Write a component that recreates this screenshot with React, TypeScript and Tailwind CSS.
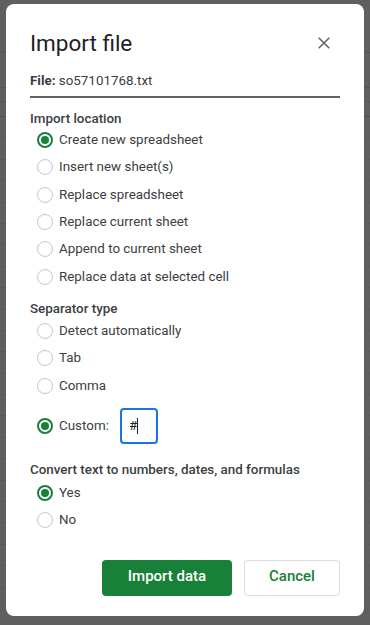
import React, { useState } from 'react';

const FONT = { fontFamily: 'Roboto, "Liberation Sans", Arial, sans-serif' };

interface RadioProps {
  label: string;
  checked: boolean;
  onSelect: () => void;
  children?: React.ReactNode;
}

function Radio({ label, checked, onSelect, children }: RadioProps) {
  return (
    <div className="flex items-center h-[27.3px] cursor-pointer" onClick={onSelect}>
      <span
        className={`ml-[7px] flex items-center justify-center w-4 h-4 rounded-full shrink-0 ${
          checked ? 'border-2 border-[#188038]' : 'border-[1.5px] border-[#c4c7c5]'
        }`}
      >
        {checked && <span className="w-2 h-2 rounded-full bg-[#188038]" />}
      </span>
      <span className="ml-[6px] text-[13.4px] leading-4 text-[#3c4043]">{label}</span>
      {children}
    </div>
  );
}

export default function App() {
  const [location, setLocation] = useState('create');
  const [separator, setSeparator] = useState('custom');
  const [convert, setConvert] = useState('yes');

  const locations = [
    { value: 'create', label: 'Create new spreadsheet' },
    { value: 'insert', label: 'Insert new sheet(s)' },
    { value: 'replace', label: 'Replace spreadsheet' },
    { value: 'current', label: 'Replace current sheet' },
    { value: 'append', label: 'Append to current sheet' },
    { value: 'cell', label: 'Replace data at selected cell' },
  ];

  const separators = [
    { value: 'auto', label: 'Detect automatically' },
    { value: 'tab', label: 'Tab' },
    { value: 'comma', label: 'Comma' },
  ];

  // 背景のシート行
  const rows = Array.from({ length: 22 });

  return (
    <div className="relative w-[370px] h-[625px] overflow-hidden bg-[#5f5f5f]" style={FONT}>
      {/* 背景（暗くしたスプレッドシート） */}
      <div className="flex flex-col">
        <div className="h-[53px] border-b border-[#555]" />
        <div className="h-[35px] border-b border-[#555]" />
        <div className="h-[14px] border-b border-[#555]" />
        <div className="h-[15px] border-b border-[#4f4f4f]" />
        {rows.map((_, i) => (
          <div key={i} className="h-[21.4px] border-b border-[#585858]" />
        ))}
      </div>

      {/* ダイアログ */}
      <div className="absolute left-[6px] top-[4px] w-[358px] h-[612px] bg-white rounded-lg px-6 pt-[25px] flex flex-col">
        <div className="flex items-center justify-between h-7">
          <h1 className="text-[22.5px] leading-7 text-[#202124]">Import file</h1>
          <svg className="mr-[10px]" width="12" height="12" viewBox="0 0 12 12" fill="none">
            <path d="M0.7 0.7L11.3 11.3M11.3 0.7L0.7 11.3" stroke="#5f6368" strokeWidth="1.5" />
          </svg>
        </div>

        <div className="mt-4 text-[13.4px] leading-4 text-[#3c4043]">
          <span className="font-bold">File:</span> so57101768.txt
        </div>
        <div className="mt-[7px] h-[1.5px] bg-[#5f6368]" />

        <div className="mt-[13px] text-[13.4px] leading-4 font-medium text-[#3c4043]">Import location</div>
        <div className="flex flex-col">
          {locations.map(l => (
            <Radio key={l.value} label={l.label} checked={location === l.value} onSelect={() => setLocation(l.value)} />
          ))}
        </div>

        <div className="mt-[11px] text-[13.4px] leading-4 font-medium text-[#3c4043]">Separator type</div>
        <div className="flex flex-col">
          {separators.map(s => (
            <Radio key={s.value} label={s.label} checked={separator === s.value} onSelect={() => setSeparator(s.value)} />
          ))}
        </div>
        <div className="mt-[9px] flex items-center h-9">
          <Radio label="Custom:" checked={separator === 'custom'} onSelect={() => setSeparator('custom')}>
            <div className="ml-[11px] w-[38px] h-9 border-2 border-[#1a73e8] rounded-[4px] flex items-center pl-[7px]">
              <span className="text-[13.4px] leading-4 text-[#202124]">#</span>
              <span className="w-px h-4 bg-[#202124]" />
            </div>
          </Radio>
        </div>

        <div className="mt-[18px] text-[13.4px] leading-4 font-medium text-[#3c4043]">
          Convert text to numbers, dates, and formulas
        </div>
        <div className="mt-px flex flex-col">
          <Radio label="Yes" checked={convert === 'yes'} onSelect={() => setConvert('yes')} />
          <Radio label="No" checked={convert === 'no'} onSelect={() => setConvert('no')} />
        </div>

        <div className="mt-[26px] flex justify-end gap-3">
          <button className="w-[130px] h-9 pb-[3px] rounded bg-[#188038] text-white text-[15px] leading-5 font-medium">
            Import data
          </button>
          <button className="w-24 h-9 pb-[3px] rounded border border-[#dadce0] bg-white text-[#188038] text-[15px] leading-5 font-medium">
            Cancel
          </button>
        </div>
      </div>
    </div>
  );
}
